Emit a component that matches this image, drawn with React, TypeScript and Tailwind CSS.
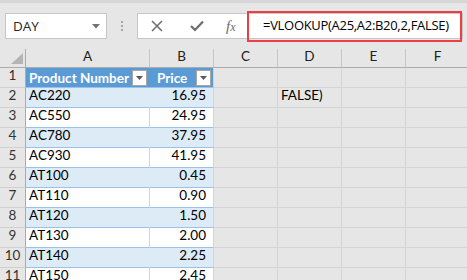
import React from 'react';

const ROWS = [
  { n: 2, code: 'AC220', price: '16.95', d: 'FALSE)' },
  { n: 3, code: 'AC550', price: '24.95' },
  { n: 4, code: 'AC780', price: '37.95' },
  { n: 5, code: 'AC930', price: '41.95' },
  { n: 6, code: 'AT100', price: '0.45' },
  { n: 7, code: 'AT110', price: '0.90' },
  { n: 8, code: 'AT120', price: '1.50' },
  { n: 9, code: 'AT130', price: '2.00' },
  { n: 10, code: 'AT140', price: '2.25' },
  { n: 11, code: 'AT150', price: '2.45' },
];

const cellFont = { fontFamily: 'Lato, "Liberation Sans", sans-serif' };

const FilterButton = () => (
  <div className="w-[15px] h-[16px] bg-white border border-[#a6a6a6] flex items-center justify-center shrink-0">
    <svg width="7" height="4" viewBox="0 0 7 4">
      <path d="M0 0 L7 0 L3.5 4 Z" fill="#595959" />
    </svg>
  </div>
);

const RowHead = ({ n }: { n: number }) => (
  <div className="w-[26px] shrink-0 border-r border-b border-r-[#ababab] border-b-[#d0d0d0] bg-[#e6e6e6] text-[#333] text-[13.5px] flex items-end justify-center pb-[2px]">
    {n}
  </div>
);

const EmptyCells = ({ d }: { d?: string }) => (
  <>
    <div className="w-[64px] shrink-0 border-r border-b border-[#d4d4d4]" />
    <div className="w-[64px] shrink-0 border-r border-b border-[#d4d4d4] pl-[3px] flex items-end pb-[2px] text-[13.5px] text-black">
      {d}
    </div>
    <div className="w-[64px] shrink-0 border-r border-b border-[#d4d4d4]" />
    <div className="w-[64px] shrink-0 border-r border-b border-[#d4d4d4]" />
  </>
);

export default function App() {
  return (
    <div className="w-[467px] h-[280px] overflow-hidden bg-[#e6e6e6] select-none">
      {/* toolbar */}
      <div className="h-[49px] border-t-[3px] border-[#d6d6d6] relative" style={{ fontFamily: '"Open Sans", "Noto Sans", sans-serif' }}>
        <div className="flex items-start pl-[5px] pt-[10px]">
          <div className="w-[102px] h-[26px] bg-white border border-[#c6c6c6] flex items-center justify-between pl-[7px] pr-[6px]">
            <span className="text-[13.5px] text-[#262626]">DAY</span>
            <svg width="8" height="5" viewBox="0 0 8 5">
              <path d="M0 0 L8 0 L4 4.5 Z" fill="#737373" />
            </svg>
          </div>
          <div className="w-[30px] h-[26px] flex flex-col items-center justify-center gap-[2px]">
            <span className="w-[2px] h-[2px] bg-[#a6a6a6]" />
            <span className="w-[2px] h-[2px] bg-[#a6a6a6]" />
            <span className="w-[2px] h-[2px] bg-[#a6a6a6]" />
          </div>
          <div className="w-[326px] h-[26px] bg-white border border-[#c6c6c6] flex items-center">
            <div className="w-[109px] shrink-0 flex items-center">
              <svg width="12" height="12" viewBox="0 0 12 12" className="ml-[13px]">
                <path d="M1 1 L11 11 M11 1 L1 11" stroke="#6b6b6b" strokeWidth="1.5" />
              </svg>
              <svg width="14" height="12" viewBox="0 0 14 12" className="ml-[27px]">
                <path d="M1 6 L5 10 L13 1.5" stroke="#6b6b6b" strokeWidth="2.2" fill="none" />
              </svg>
              <span
                className="ml-[22px] text-[15px] italic text-[#6b6b6b] leading-none"
                style={{ fontFamily: '"Liberation Serif", serif' }}
              >
                f<span className="text-[12px]">x</span>
              </span>
            </div>
            <div className="pl-[16px] text-[13px] tracking-[-0.3px] text-black whitespace-nowrap">=VLOOKUP(A25,A2:B20,2,FALSE)</div>
          </div>
        </div>
        {/* highlight annotation */}
        <div className="absolute left-[247px] top-[8px] w-[215px] h-[31px] border-2 border-[#ee3e43]" />
      </div>

      {/* sheet */}
      <div style={cellFont}>
        {/* column headers */}
        <div className="flex h-[19px] text-[13.5px] text-[#222]">
          <div className="w-[26px] shrink-0 border-r border-b border-[#ababab] bg-[#e6e6e6] relative">
            <svg width="12" height="11" viewBox="0 0 12 11" className="absolute right-[2px] bottom-[3px]">
              <path d="M12 0 L12 11 L0 11 Z" fill="#b5b5b5" />
            </svg>
          </div>
          {[
            ['A', 'w-[124px]'],
            ['B', 'w-[64px]'],
            ['C', 'w-[64px]'],
            ['D', 'w-[64px]'],
            ['E', 'w-[64px]'],
            ['F', 'w-[64px]'],
          ].map(([l, w]) => (
            <div
              key={l}
              className={`${w} shrink-0 border-r border-b border-r-[#c6c6c6] border-b-[#ababab] bg-[#e6e6e6] flex items-end justify-center pb-[1px]`}
            >
              {l}
            </div>
          ))}
        </div>

        {/* row 1: table header */}
        <div className="flex h-[20px]">
          <RowHead n={1} />
          <div className="w-[124px] shrink-0 bg-[#5b9bd5] border-b border-[#9bc2e6] flex items-center justify-between pl-[3px] pr-[3px] pt-[1px]">
            <span className="text-[13.5px] font-bold text-white">Product Number</span>
            <FilterButton />
          </div>
          <div className="w-[64px] shrink-0 bg-[#5b9bd5] border-r border-b border-r-[#d4d4d4] border-b-[#9bc2e6] flex items-center justify-between pl-[7px] pr-[2px] pt-[1px]">
            <span className="text-[13.5px] font-bold text-white">Price</span>
            <FilterButton />
          </div>
          <EmptyCells />
        </div>

        {ROWS.map((r) => {
          const banded = r.n % 2 === 0;
          return (
            <div key={r.n} className="flex h-[20px]">
              <RowHead n={r.n} />
              <div
                className={`w-[124px] shrink-0 border-r border-b border-b-[#9bc2e6] pl-[3px] flex items-end pb-[2px] text-[13.5px] text-black ${
                  banded ? 'bg-[#ddebf7] border-r-[#ddebf7]' : 'bg-white border-r-[#d4d4d4]'
                }`}
              >
                {r.code}
              </div>
              <div
                className={`w-[64px] shrink-0 border-r border-b border-r-[#d4d4d4] border-b-[#9bc2e6] pr-[7px] flex items-end justify-end pb-[2px] text-[13.5px] text-black ${
                  banded ? 'bg-[#ddebf7]' : 'bg-white'
                }`}
              >
                {r.price}
              </div>
              <EmptyCells d={r.d} />
            </div>
          );
        })}
      </div>
    </div>
  );
}
